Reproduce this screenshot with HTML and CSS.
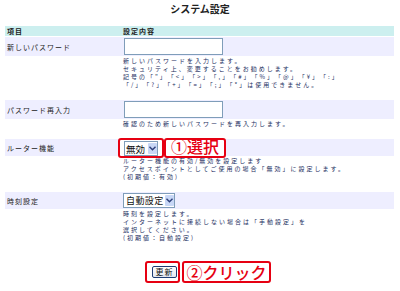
FILE: index.html
```html
<!DOCTYPE html>
<html lang="ja">
<head>
    <meta charset="UTF-8">
    <meta name="viewport" content="width=device-width, initial-scale=1.0">
    <title>システム設定</title>
    <link rel="stylesheet" href="styles.css">
</head>
<body>

    <h1 class="page-title">システム設定</h1>

    <form class="settings" method="post">
        <div class="row row-head">
            <div class="cell-label">項目</div>
            <div class="cell-value">設定内容</div>
        </div>

        <div class="row">
            <label class="cell-label" for="new_pass">新しいパスワード</label>
            <div class="cell-value"><input type="password" id="new_pass" name="new_pass" class="text-input"></div>
        </div>
        <div class="desc">
            新しいパスワードを入力します。<br>
            セキュリティ上、変更することをお勧めします。<br>
            記号の「"」「&lt;」「&gt;」「,」「#」「%」「@」「¥」「:」<br>
            「/」「?」「+」「=」「;」「*」は使用できません。
        </div>

        <div class="row">
            <label class="cell-label" for="re_pass">パスワード再入力</label>
            <div class="cell-value"><input type="password" id="re_pass" name="re_pass" class="text-input"></div>
        </div>
        <div class="desc">確認のため新しいパスワードを再入力します。</div>

        <div class="row">
            <label class="cell-label" for="router">ルーター機能</label>
            <div class="cell-value mark-line">
                <span class="mark">
                    <span class="select-wrap select-big">
                        <select id="router" name="router">
                            <option>無効</option>
                            <option>有効</option>
                        </select>
                        <span class="select-arrow"><svg width="7" height="5" viewBox="0 0 7 5"><path d="M0.5 0.8 L3.5 3.8 L6.5 0.8" fill="none" stroke="#2d3f7a" stroke-width="1.4"/></svg></span>
                    </span>
                </span>
                <span class="callout callout-select">①選択</span>
            </div>
        </div>
        <div class="desc">
            ルーター機能の有効/無効を設定します<br>
            アクセスポイントとしてご使用の場合「無効」に設定します。<br>
            (初期値：有効)
        </div>

        <div class="row">
            <label class="cell-label" for="clock">時刻設定</label>
            <div class="cell-value">
                <span class="select-wrap select-small">
                    <select id="clock" name="clock">
                        <option>自動設定</option>
                        <option>手動設定</option>
                    </select>
                    <span class="select-arrow"><svg width="7" height="5" viewBox="0 0 7 5"><path d="M0.5 0.8 L3.5 3.8 L6.5 0.8" fill="none" stroke="#2d3f7a" stroke-width="1.4"/></svg></span>
                </span>
            </div>
        </div>
        <div class="desc">
            時刻を設定します。<br>
            インターネットに接続しない場合は「手動設定」を<br>
            選択してください。<br>
            (初期値：自動設定)
        </div>

        <div class="actions">
            <span class="mark mark-button"><button type="submit" class="btn">更新</button></span>
            <span class="callout callout-button">②クリック</span>
        </div>
    </form>

</body>
</html>
```

FILE: styles.css
```css
body {
    margin: 0;
    font-family: "Noto Sans CJK JP", "Noto Sans", sans-serif;
    color: #222;
    background: #fff;
    text-spacing-trim: space-all;
}

.page-title {
    margin: 3px 0 0;
    font-size: 10px;
    line-height: 12px;
    font-weight: bold;
    text-align: center;
}

.settings {
    margin: 11px 6px 0 5px;
    font-size: 7px;
    letter-spacing: 1px;
}

.row {
    display: flex;
    align-items: center;
    padding: 1px 0;
    background: #eeeeff;
}

.row-head {
    height: 10px;
    padding: 0;
    margin-bottom: 1px;
    background: #ccefef;
    font-weight: bold;
}

.cell-label {
    width: 116px;
    padding-left: 2px;
}

.cell-value {
    flex: 1;
}

.text-input {
    display: block;
    box-sizing: border-box;
    width: 99px;
    height: 17px;
    margin: 0 0 0 1px;
    border: 1px solid #7f9db9;
    background: #fff;
}

.desc {
    padding: 1px 0 11px 118px;
    font-size: 6px;
    letter-spacing: 2px;
    line-height: 8px;
    color: #1a2d5e;
}

/* red annotation boxes */
.mark-line {
    display: flex;
}

.mark,
.callout {
    display: flex;
    align-items: center;
    box-sizing: border-box;
    border: 2px solid #e60012;
    border-radius: 3px;
    background: #fff;
}

.mark {
    height: 20px;
    margin: -2px 0 -3px -5px;
    padding: 0 4px;
}

.callout {
    justify-content: center;
    color: #e60012;
    letter-spacing: 0;
    font-weight: 500;
}

.callout-select {
    width: 62px;
    height: 20px;
    margin: -2px 0 -3px;
    padding-bottom: 4px;
    font-size: 16px;
}

/* selects */
.select-wrap {
    position: relative;
    display: inline-block;
    vertical-align: middle;
}

.select-wrap select {
    display: block;
    box-sizing: border-box;
    appearance: none;
    margin: 0;
    padding: 0 0 0 2px;
    border: 1px solid #7f9db9;
    border-radius: 0;
    background: #fff;
    color: #111;
    font-family: "Noto Sans CJK JP", sans-serif;
    letter-spacing: 0;
}

.select-big select {
    width: 34px;
    height: 15px;
    padding-left: 1px;
    font-size: 9.5px;
}

.select-small select {
    width: 52px;
    height: 15px;
    font-size: 9px;
    letter-spacing: 0.4px;
}

.select-arrow {
    position: absolute;
    top: 2px;
    right: 1px;
    bottom: 2px;
    width: 9px;
    display: flex;
    align-items: center;
    justify-content: center;
    background: #c8d7f6;
    border-radius: 1px;
}

/* submit */
.actions {
    display: flex;
    gap: 2px;
    margin-top: 8px;
    padding-left: 140px;
}

.mark-button {
    width: 35px;
    height: 22px;
    margin: 0;
    padding: 0 0 0 5px;
}

.btn {
    box-sizing: border-box;
    width: 25px;
    height: 12px;
    padding: 0;
    border: 1px solid #1d3c74;
    border-radius: 2px;
    background: linear-gradient(#fdfdfd, #e3e8f2);
    color: #111;
    font-family: "Noto Sans CJK JP", sans-serif;
    font-size: 8px;
    line-height: 10px;
    letter-spacing: 1px;
}

.callout-button {
    width: 89px;
    height: 22px;
    font-size: 16px;
}
```
